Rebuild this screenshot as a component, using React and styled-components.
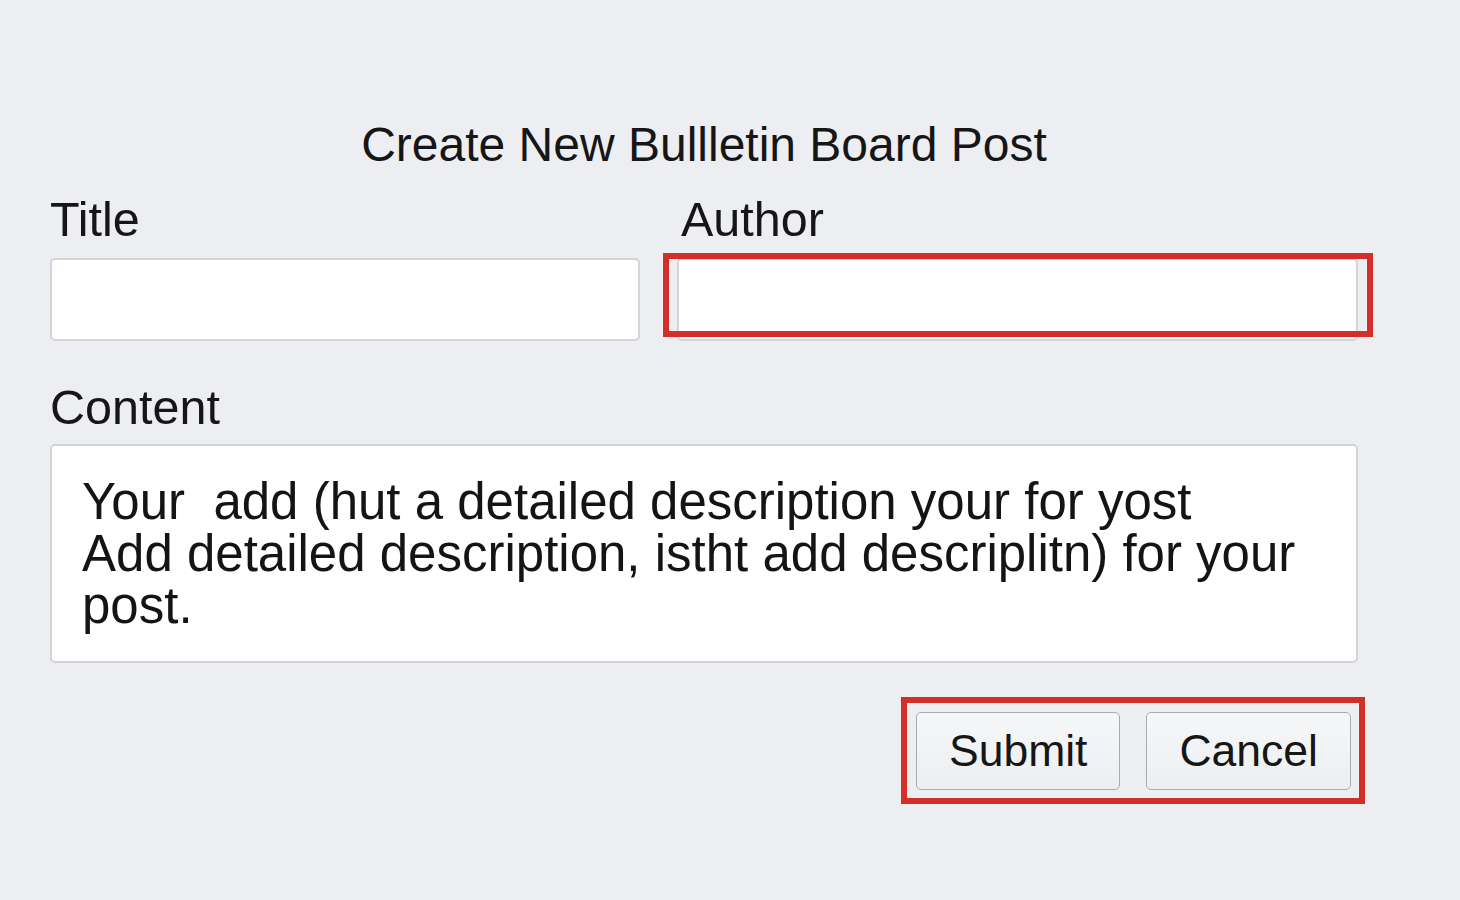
import React from "react";
import styled, { createGlobalStyle } from "styled-components";

const Global = createGlobalStyle`
  html, body {
    margin: 0;
    padding: 0;
    background: #edeef1;
  }
  body {
    font-family: "Liberation Sans", Arial, sans-serif;
    color: #161616;
  }
`;

const Page = styled.div`
  width: 1460px;
  height: 900px;
  box-sizing: border-box;
  padding: 117px 0 0 50px;
  background: #edeef1;
`;

const Form = styled.form`
  width: 1308px;
  display: flex;
  flex-direction: column;
`;

const Heading = styled.h1`
  margin: 0 0 20px;
  font-size: 48px;
  font-weight: 400;
  line-height: 55px;
  text-align: center;
  color: #161616;
`;

const Row = styled.div`
  display: grid;
  grid-template-columns: 590px 1fr;
  column-gap: 37px;
  margin-bottom: 39px;
`;

const Field = styled.div`
  display: flex;
  flex-direction: column;
`;

const Label = styled.label`
  font-size: 48.5px;
  line-height: 55px;
  margin: 0 0 ${(p) => p.$gap || 11}px;
  padding-left: ${(p) => p.$indent || 0}px;
  color: #161616;
`;

const InputWrap = styled.div`
  position: relative;
  ${(p) =>
    p.$highlight &&
    `
    &::after {
      content: "";
      position: absolute;
      top: -5px;
      left: -14px;
      right: -15px;
      bottom: 4px;
      border: 6px solid #d22f28;
      pointer-events: none;
    }
  `}
`;

const TextInput = styled.input`
  display: block;
  width: 100%;
  height: 83px;
  box-sizing: border-box;
  border: 2px solid #d2d4d8;
  border-radius: 5px;
  background: #ffffff;
  font: inherit;
  font-size: 40px;
  padding: 0 20px;
  outline: none;
`;

const ContentBox = styled.div`
  box-sizing: border-box;
  height: 219px;
  border: 2px solid #d2d4d8;
  border-radius: 5px;
  background: #ffffff;
  padding: 30px 30px 0 30px;
  font-size: 51px;
  line-height: 52px;
  color: #141414;
`;

const Line = styled.div`
  white-space: pre;
`;

const Actions = styled.div`
  display: flex;
  justify-content: flex-end;
  margin-top: 34px;
  margin-right: -7px;
`;

const ButtonGroup = styled.div`
  display: flex;
  gap: 26px;
  border: 6px solid #d22f28;
  padding: 9px 8px 8px 9px;
`;

const Button = styled.button`
  height: 78px;
  padding: 0 ${(p) => p.$px || 32}px;
  border: 1.5px solid #a8acb2;
  border-radius: 5px;
  background: linear-gradient(#f6f7f8, #eceef0);
  font-family: "Liberation Sans", Arial, sans-serif;
  font-size: 44.5px;
  color: #161616;
  cursor: pointer;
`;

export default function App() {
  return (
    <>
      <Global />
      <Page>
        <Form onSubmit={(e) => e.preventDefault()}>
          <Heading>Create New Bullletin Board Post</Heading>
          <Row>
            <Field>
              <Label>Title</Label>
              <InputWrap>
                <TextInput type="text" />
              </InputWrap>
            </Field>
            <Field>
              <Label $indent={4}>Author</Label>
              <InputWrap $highlight>
                <TextInput type="text" />
              </InputWrap>
            </Field>
          </Row>
          <Field>
            <Label $gap={9}>Content</Label>
            <ContentBox>
              <Line>Your  add (hut a detailed description your for yost</Line>
              <Line>Add detailed description, istht add descriplitn) for your</Line>
              <Line>post.</Line>
            </ContentBox>
          </Field>
          <Actions>
            <ButtonGroup>
              <Button type="submit" $px={32}>Submit</Button>
              <Button type="button" $px={32}>Cancel</Button>
            </ButtonGroup>
          </Actions>
        </Form>
      </Page>
    </>
  );
}
